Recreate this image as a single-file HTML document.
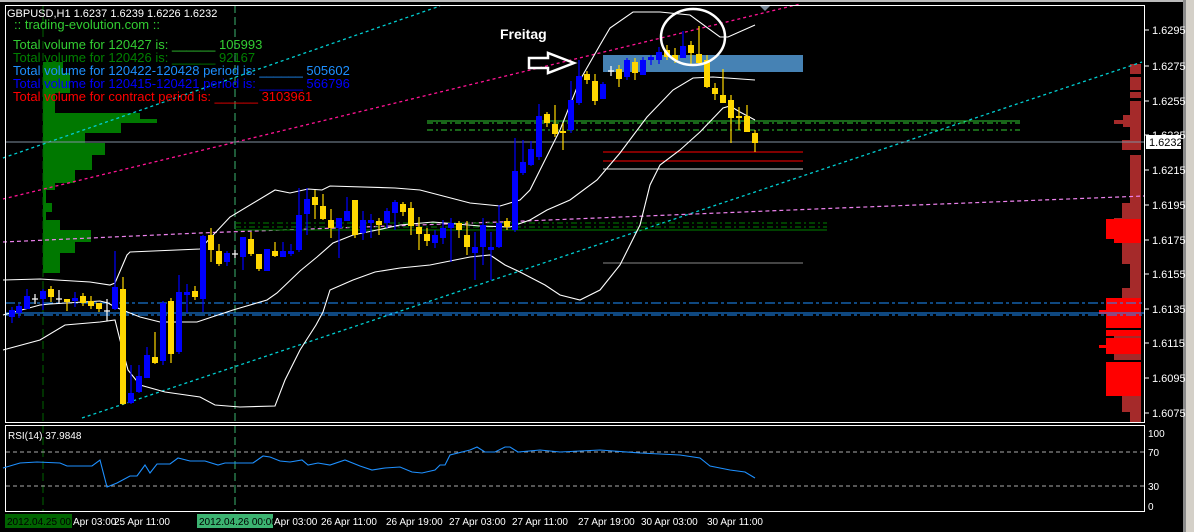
<!DOCTYPE html>
<html><head><meta charset="utf-8"><style>
html,body{margin:0;padding:0;background:#000;width:1194px;height:532px;overflow:hidden}
svg{display:block}
text{font-family:"Liberation Sans",Arial,sans-serif}
</style></head><body>
<svg width="1194" height="532" viewBox="0 0 1194 532" xmlns="http://www.w3.org/2000/svg">
<rect x="0" y="0" width="1194" height="532" fill="#000"/>
<rect x="1186" y="0" width="8" height="532" fill="#d4d0c8"/>
<rect x="1183" y="0" width="3" height="532" fill="#8a8a8a"/>
<rect x="0" y="0" width="1183" height="2" fill="#bbb"/>
<polygon points="759,5 771,5 765,11" fill="#7a8a9a"/>

<!-- green volume profile -->
<g fill="#007800">
<rect x="43" y="62" width="20" height="11"/>
<rect x="43" y="73" width="27" height="20"/>
<rect x="43" y="93" width="12" height="20"/>
<rect x="43" y="113" width="97" height="10"/>
<rect x="126" y="119" width="31" height="4"/>
<rect x="43" y="123" width="78" height="10"/>
<rect x="43" y="133" width="42" height="10"/>
<rect x="43" y="143" width="62" height="12"/>
<rect x="43" y="155" width="49" height="15"/>
<rect x="43" y="170" width="32" height="13"/>
<rect x="43" y="183" width="12" height="7"/>
<rect x="43" y="190" width="3" height="13"/>
<rect x="43" y="203" width="9" height="9"/>
<rect x="43" y="212" width="3" height="8"/>
<rect x="43" y="220" width="17" height="10"/>
<rect x="43" y="230" width="48" height="12"/>
<rect x="43" y="242" width="32" height="11"/>
<rect x="43" y="253" width="17" height="20"/>
</g>

<!-- red volume profile -->
<g fill="#a52a2a">
<rect x="1130" y="64" width="11" height="10"/>
<rect x="1130" y="77" width="11" height="13"/>
<rect x="1130" y="92" width="11" height="6"/>
<rect x="1130" y="101" width="11" height="14"/>
<rect x="1123" y="115" width="18" height="12"/>
<rect x="1114" y="120" width="10" height="4"/>
<rect x="1130" y="127" width="11" height="13"/>
<rect x="1122" y="140" width="19" height="10"/>
<rect x="1130" y="155" width="11" height="48"/>
<rect x="1122" y="203" width="19" height="15"/>
<rect x="1114" y="218" width="27" height="22"/>
<rect x="1122" y="240" width="19" height="24"/>
<rect x="1130" y="264" width="11" height="24"/>
<rect x="1122" y="288" width="19" height="10"/>
<rect x="1114" y="334" width="27" height="26"/>
<rect x="1122" y="392" width="19" height="20"/>
<rect x="1130" y="412" width="11" height="10"/>
</g>
<g fill="#ff0000">
<rect x="1106" y="219" width="35" height="20"/>
<rect x="1114" y="238" width="27" height="5"/>
<rect x="1106" y="298" width="35" height="30"/>
<rect x="1099" y="310" width="8" height="4"/>
<rect x="1106" y="330" width="35" height="6"/>
<rect x="1106" y="338" width="35" height="16"/>
<rect x="1099" y="345" width="8" height="3"/>
<rect x="1106" y="362" width="35" height="34"/>
</g>

<!-- vertical dashed -->
<line x1="43" y1="5" x2="43" y2="512" stroke="#006400" stroke-dasharray="8,4"/>
<line x1="235" y1="5" x2="235" y2="512" stroke="#3cb371" stroke-dasharray="8,4"/>

<!-- trend lines -->
<line x1="3" y1="199" x2="800" y2="4" stroke="#ff1493" stroke-width="1.3" stroke-dasharray="3,3"/>
<line x1="3" y1="158" x2="440" y2="6" stroke="#00ced1" stroke-width="1.3" stroke-dasharray="3,3"/>
<line x1="82" y1="418" x2="1142" y2="62" stroke="#00ced1" stroke-width="1.3" stroke-dasharray="3,3"/>
<polyline points="3,242 200,233 500,222 840,208 1144,196" fill="none" stroke="#ee82ee" stroke-width="1.2" stroke-dasharray="4,3"/>

<!-- horizontal lines -->
<line x1="5" y1="142" x2="1144" y2="142" stroke="#8090a0"/>
<line x1="5" y1="303" x2="1144" y2="303" stroke="#1e90ff" stroke-dasharray="10,3,3,3"/>
<line x1="5" y1="313" x2="1144" y2="313" stroke="#1e90ff"/>
<line x1="5" y1="315" x2="1144" y2="315" stroke="#1e90ff" stroke-dasharray="10,3,3,3"/>
<line x1="235" y1="223" x2="827" y2="223" stroke="#008000" stroke-dasharray="6,3,2,3"/>
<line x1="235" y1="227" x2="827" y2="227" stroke="#008000" stroke-dasharray="6,3,2,3"/>
<line x1="235" y1="230" x2="827" y2="230" stroke="#008000"/>
<line x1="427" y1="121" x2="1020" y2="121" stroke="#32cd32"/>
<line x1="427" y1="123" x2="1020" y2="123" stroke="#32cd32" stroke-dasharray="6,3,2,3"/>
<line x1="427" y1="130" x2="1020" y2="130" stroke="#32cd32" stroke-dasharray="6,3,2,3"/>
<line x1="603" y1="152" x2="803" y2="152" stroke="#ff0000"/>
<line x1="603" y1="161" x2="803" y2="161" stroke="#ff0000"/>
<line x1="603" y1="169" x2="803" y2="169" stroke="#dddddd"/>
<line x1="603" y1="263" x2="803" y2="263" stroke="#888"/>

<rect x="603" y="55" width="200" height="17" fill="#4682b4"/>

<!-- bollinger -->
<g fill="none" stroke="#fff" stroke-width="1.1">
<polyline points="3,280 40,279 90,282 110,285 115,283 127,255 130,252 200,249 230,217 275,190 290,193 308,189 322,190 330,186 395,188 420,190 470,203 500,206 520,200 530,190 545,160 560,130 580,80 600,45 610,28 633,12 660,12 690,15 720,37 728,37 755,25"/>
<polyline points="3,315 40,305 50,304 100,301 108,303 115,307 140,317 160,322 197,322 233,310 267,300 277,293 300,271 317,257 333,243 353,235 377,230 400,225 433,222 480,226 510,227 530,220 547,210 570,200 597,180 620,153 647,117 673,90 693,78 713,77 755,80"/>
<polyline points="3,350 40,340 65,325 100,322 115,320 120,340 128,370 140,385 165,392 200,397 215,405 240,407 275,406 285,380 300,350 316,325 323,312 330,290 353,280 375,272 400,268 430,265 470,257 490,255 505,265 520,272 545,285 560,295 580,300 600,290 620,265 640,225 650,185 660,165 680,150 700,132 723,108 730,106 740,112 755,120"/>
</g>

<!-- wicks -->
<path stroke="#ffd700" stroke-width="1.2" fill="none" d="M51 286V302M67 299V311M83 293V306M91 296V309M99 303V312M123 277V405M155 332V364M171 298V363M195 286V300M211 228V262M219 244V266M251 232V256M259 254V271M275 242V257M315 190V219M323 194V220M331 209V238M355 200V238M379 218V235M403 202V216M411 202V235M419 217V250M427 228V246M459 221V238M467 221V255M507 218V230M547 112V127M555 105V137M563 123V150M587 71V84M595 74V105M619 65V87M635 58V80M667 45V60M675 48V63M691 41V64M699 26V64M707 55V88M715 83V100M723 69V103M731 95V143M739 107V130M747 105V132M755 130V152"/>
<path stroke="#0000ff" stroke-width="1.2" fill="none" d="M12 307V323M19 304V318M27 289V309M43 289V310M75 292V307M115 251V310M131 365V404M139 365V393M147 347V378M163 301V365M179 275V354M187 284V313M203 235V312M227 251V266M243 237V270M267 249V271M283 242V257M291 244V256M299 188V252M307 188V235M339 218V258M347 197V221M363 211V240M371 214V238M387 208V228M395 200V230M435 230V248M443 220V244M451 218V262M475 232V280M483 218V265M491 232V280M499 205V248M515 138V232M523 140V175M531 141V166M539 104V160M571 81V133M579 60V105M603 82V99M627 58V80M643 57V75M651 55V65M659 47V64M683 31V58"/>
<path stroke="#fff" stroke-width="1.2" fill="none" d="M32 299H38M35 294V304M56 299H62M59 290V304M104 311H110M107 299V321M232 254H238M235 250V258M608 71H614M611 66V76"/>

<!-- bodies -->
<g fill="#ffd700">
<rect x="48" y="289" width="6" height="8"/><rect x="64" y="299" width="6" height="3"/><rect x="80" y="296" width="6" height="7"/><rect x="88" y="301" width="6" height="5"/><rect x="96" y="303" width="6" height="6"/><rect x="120" y="289" width="6" height="115"/><rect x="152" y="357" width="6" height="6"/><rect x="168" y="301" width="6" height="53"/><rect x="192" y="291" width="6" height="6"/><rect x="208" y="235" width="6" height="15"/><rect x="216" y="251" width="6" height="13"/><rect x="248" y="239" width="6" height="15"/><rect x="256" y="254" width="6" height="15"/><rect x="272" y="251" width="6" height="5"/><rect x="312" y="197" width="6" height="8"/><rect x="320" y="206" width="6" height="13"/><rect x="328" y="220" width="6" height="8"/><rect x="352" y="200" width="6" height="35"/><rect x="376" y="221" width="6" height="4"/><rect x="400" y="204" width="6" height="8"/><rect x="408" y="208" width="6" height="18"/><rect x="416" y="227" width="6" height="7"/><rect x="424" y="234" width="6" height="7"/><rect x="456" y="223" width="6" height="7"/><rect x="464" y="235" width="6" height="12"/><rect x="504" y="221" width="6" height="6"/><rect x="544" y="114" width="6" height="9"/><rect x="552" y="124" width="6" height="10"/><rect x="560" y="131" width="6" height="2"/><rect x="584" y="74" width="6" height="6"/><rect x="592" y="81" width="6" height="20"/><rect x="616" y="69" width="6" height="10"/><rect x="632" y="62" width="6" height="11"/><rect x="664" y="50" width="6" height="7"/><rect x="672" y="55" width="6" height="5"/><rect x="688" y="45" width="6" height="8"/><rect x="696" y="54" width="6" height="9"/><rect x="704" y="60" width="6" height="27"/><rect x="712" y="88" width="6" height="6"/><rect x="720" y="95" width="6" height="8"/><rect x="728" y="100" width="6" height="18"/><rect x="736" y="116" width="6" height="2"/><rect x="744" y="116" width="6" height="16"/><rect x="752" y="133" width="6" height="10"/>
</g>
<g fill="#0000ff">
<rect x="9" y="310" width="6" height="7"/><rect x="16" y="306" width="6" height="7"/><rect x="24" y="296" width="6" height="13"/><rect x="40" y="291" width="6" height="8"/><rect x="72" y="298" width="6" height="3"/><rect x="112" y="287" width="6" height="22"/><rect x="128" y="393" width="6" height="10"/><rect x="136" y="376" width="6" height="16"/><rect x="144" y="355" width="6" height="23"/><rect x="160" y="303" width="6" height="58"/><rect x="176" y="292" width="6" height="60"/><rect x="184" y="292" width="6" height="3"/><rect x="200" y="236" width="6" height="63"/><rect x="224" y="253" width="6" height="9"/><rect x="240" y="237" width="6" height="20"/><rect x="264" y="249" width="6" height="22"/><rect x="280" y="251" width="6" height="6"/><rect x="288" y="251" width="6" height="3"/><rect x="296" y="215" width="6" height="35"/><rect x="304" y="199" width="6" height="15"/><rect x="336" y="218" width="6" height="10"/><rect x="344" y="211" width="6" height="10"/><rect x="360" y="220" width="6" height="13"/><rect x="368" y="220" width="6" height="3"/><rect x="384" y="211" width="6" height="12"/><rect x="392" y="202" width="6" height="11"/><rect x="432" y="235" width="6" height="8"/><rect x="440" y="228" width="6" height="10"/><rect x="448" y="223" width="6" height="5"/><rect x="472" y="247" width="6" height="6"/><rect x="480" y="225" width="6" height="22"/><rect x="488" y="247" width="6" height="3"/><rect x="496" y="223" width="6" height="24"/><rect x="512" y="171" width="6" height="59"/><rect x="520" y="162" width="6" height="11"/><rect x="528" y="149" width="6" height="16"/><rect x="536" y="116" width="6" height="41"/><rect x="568" y="100" width="6" height="30"/><rect x="576" y="76" width="6" height="27"/><rect x="600" y="84" width="6" height="15"/><rect x="624" y="60" width="6" height="17"/><rect x="640" y="60" width="6" height="15"/><rect x="648" y="57" width="6" height="3"/><rect x="656" y="52" width="6" height="8"/><rect x="680" y="46" width="6" height="12"/>
</g>

<!-- annotations -->
<ellipse cx="693" cy="37" rx="32" ry="28" fill="none" stroke="#fff" stroke-width="2.5"/>
<polygon points="529,58 548,58 548,53 574,63 548,73 548,68 529,68" fill="none" stroke="#fff" stroke-width="2.5"/>
<text x="500" y="39" fill="#fff" font-size="14" font-weight="bold">Freitag</text>

<!-- text overlay -->
<text x="7" y="17" fill="#fff" font-size="11">GBPUSD,H1  1.6237 1.6239 1.6226 1.6232</text>
<text x="14" y="29" fill="#32cd32" font-size="13">:: trading-evolution.com ::</text>
<text x="13" y="49" fill="#32cd32" font-size="13">Total volume for 120427 is: ______ 105993</text>
<text x="13" y="62" fill="#008000" font-size="13">Total volume for 120426 is: ______ 92167</text>
<text x="13" y="75" fill="#1e90ff" font-size="13">Total volume for 120422-120428 period is: ______ 505602</text>
<text x="13" y="88" fill="#0000ff" font-size="13">Total volume for 120415-120421 period is: ______ 566796</text>
<text x="13" y="101" fill="#ff0000" font-size="13">Total volume for contract period is: ______ 3103961</text>

<!-- frames -->
<rect x="5.5" y="5.5" width="1139" height="417" fill="none" stroke="#fff"/>
<rect x="5.5" y="425.5" width="1139" height="86" fill="none" stroke="#fff"/>

<!-- price axis -->
<g fill="#fff" font-size="11">
<text x="1152" y="34">1.6295</text><text x="1152" y="70">1.6275</text><text x="1152" y="105">1.6255</text><text x="1152" y="139">1.6235</text><text x="1152" y="174">1.6215</text><text x="1152" y="209">1.6195</text><text x="1152" y="244">1.6175</text><text x="1152" y="278">1.6155</text><text x="1152" y="313">1.6135</text><text x="1152" y="347">1.6115</text><text x="1152" y="382">1.6095</text><text x="1152" y="417">1.6075</text>
</g>
<g stroke="#fff"><path d="M1145 30h4M1145 66h4M1145 101h4M1145 135h4M1145 170h4M1145 205h4M1145 240h4M1145 274h4M1145 309h4M1145 343h4M1145 378h4M1145 413h4"/></g>
<rect x="1146" y="135" width="35" height="14" fill="#fff"/>
<text x="1149" y="146" fill="#000" font-size="11">1.6232</text>

<!-- RSI -->
<line x1="6" y1="452" x2="1144" y2="452" stroke="#aaa" stroke-dasharray="4,3"/>
<line x1="6" y1="486" x2="1144" y2="486" stroke="#aaa" stroke-dasharray="4,3"/>
<text x="8" y="439" fill="#fff" font-size="10">RSI(14) 37.9848</text>
<polyline fill="none" stroke="#1e90ff" stroke-width="1.1" points="3,468 20,463 37,462 60,463 67,466 92,466 100,460 107,487 117,483 130,476 137,476 145,465 150,473 157,464 170,464 178,458 190,461 205,461 218,465 225,463 253,463 263,456 270,457 280,461 290,462 302,460 308,465 318,463 330,465 345,460 360,466 372,470 385,468 400,467 412,472 422,473 435,470 440,465 445,465 450,455 470,450 477,447 485,452 495,452 505,447 510,447 518,452 540,450 560,452 600,450 640,453 680,455 700,458 710,466 730,470 745,472 755,478"/>
<g fill="#fff" font-size="10">
<text x="1148" y="437">100</text><text x="1148" y="456">70</text><text x="1148" y="490">30</text><text x="1148" y="510">0</text>
</g>

<!-- time axis -->
<rect x="5" y="514" width="67" height="14" fill="#006400"/>
<rect x="197" y="514" width="76" height="14" fill="#3cb371"/>
<g fill="#fff" font-size="10">
<text x="7" y="525" fill="#000">2012.04.25 00:00</text>
<text x="73" y="525">Apr 03:00</text>
<text x="114" y="525">25 Apr 11:00</text>
<text x="199" y="525" fill="#000">2012.04.26 00:00</text>
<text x="274" y="525">Apr 03:00</text>
<text x="321" y="525">26 Apr 11:00</text>
<text x="386" y="525">26 Apr 19:00</text>
<text x="449" y="525">27 Apr 03:00</text>
<text x="512" y="525">27 Apr 11:00</text>
<text x="578" y="525">27 Apr 19:00</text>
<text x="641" y="525">30 Apr 03:00</text>
<text x="707" y="525">30 Apr 11:00</text>
</g>
</svg>
</body></html>
